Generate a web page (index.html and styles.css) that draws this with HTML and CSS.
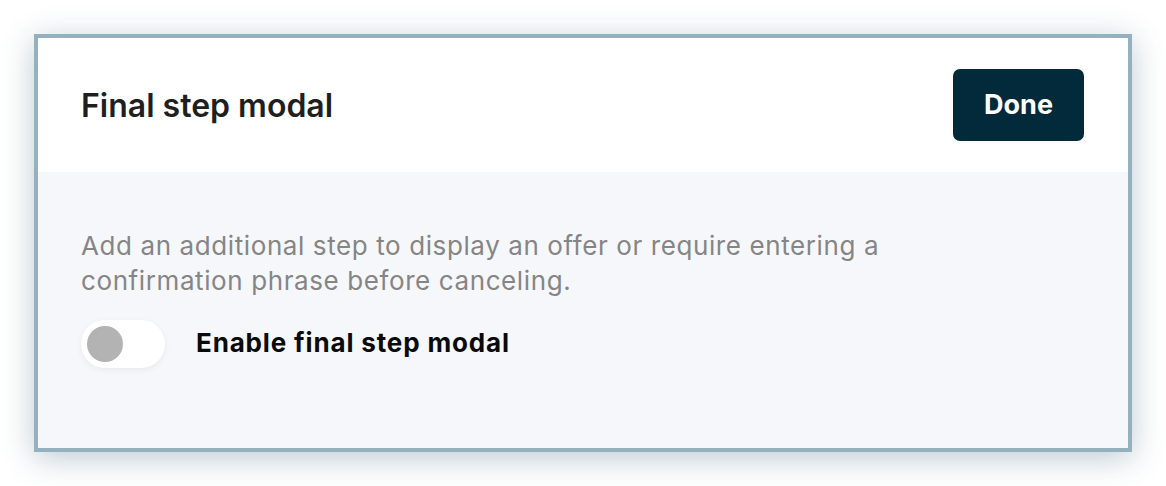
FILE: index.html
```html
<!DOCTYPE html>
<html lang="en">
<head>
    <meta charset="UTF-8">
    <meta name="viewport" content="width=device-width, initial-scale=1.0">
    <title>Final step modal</title>
    <link rel="stylesheet" href="styles.css">
</head>
<body>
    <section class="panel">
        <header class="panel-header">
            <h1>Final step modal</h1>
            <button class="btn-done" type="button">Done</button>
        </header>

        <div class="panel-body">
            <p class="description">Add an additional step to display an offer or require entering a confirmation phrase before canceling.</p>
            <label class="toggle-row">
                <span class="toggle"><span class="knob"></span></span>
                <span class="toggle-label">Enable final step modal</span>
            </label>
        </div>
    </section>
</body>
</html>
```

FILE: styles.css
```css
* {
    margin: 0;
    padding: 0;
    box-sizing: border-box;
}

body {
    font-family: Inter, 'Noto Sans', sans-serif;
    background: #fff;
    padding: 34px;
    height: 486px;
}

.panel {
    height: 418px;
    border: 4px solid #95b1bf;
    background: #f6f7fb;
    box-shadow: 0 6px 30px rgba(50, 90, 115, 0.32);
    display: flex;
    flex-direction: column;
}

.panel-header {
    background: #fff;
    height: 134px;
    display: flex;
    align-items: center;
    justify-content: space-between;
    padding: 0 44px 0 43px;
}

.panel-header h1 {
    font-size: 32px;
    font-weight: 600;
    color: #1f1f1f;
}

.btn-done {
    width: 131px;
    height: 72px;
    border: none;
    border-radius: 7px;
    background: #032a3a;
    color: #fff;
    font-family: inherit;
    font-size: 27px;
    font-weight: 700;
    padding-bottom: 2px;
    cursor: pointer;
}

.panel-body {
    flex: 1;
    padding: 56px 43px 0;
}

.description {
    max-width: 860px;
    font-size: 26px;
    letter-spacing: 0.6px;
    line-height: 35px;
    color: #858585;
}

.toggle-row {
    display: flex;
    align-items: center;
    gap: 31px;
    margin-top: 22px;
}

.toggle {
    width: 84px;
    height: 48px;
    border-radius: 24px;
    background: #fff;
    box-shadow: 0 2px 6px rgba(0, 0, 0, 0.06);
    display: flex;
    align-items: center;
    padding: 0 6px;
}

.knob {
    width: 36px;
    height: 36px;
    border-radius: 50%;
    background: #b3b3b3;
}

.toggle-label {
    font-size: 26px;
    font-weight: 700;
    letter-spacing: 0.85px;
    color: #0a0a0a;
    margin-top: -4px;
}
```
